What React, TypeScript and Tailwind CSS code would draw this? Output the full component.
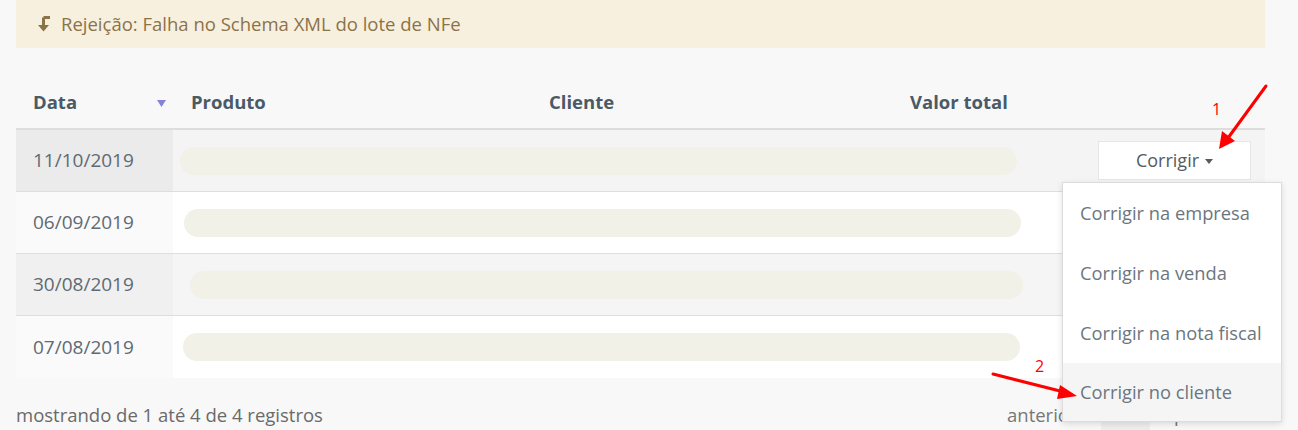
import React from "react";

const rows = [
  { date: "11/10/2019", rowBg: "bg-[#f4f4f4]", dateBg: "bg-[#ebebeb]", pill: "ml-[7px] w-[837px]" },
  { date: "06/09/2019", rowBg: "bg-white", dateBg: "bg-[#fafafa]", pill: "ml-[11px] w-[837px]" },
  { date: "30/08/2019", rowBg: "bg-[#f5f5f5]", dateBg: "bg-[#f0f0f0]", pill: "ml-[17px] w-[833px]" },
  { date: "07/08/2019", rowBg: "bg-white", dateBg: "bg-[#fafafa]", pill: "ml-[10px] w-[837px]" },
];

export default function App() {
  return (
    <div className="relative w-[1298px] h-[430px] overflow-hidden bg-[#f8f8f8] font-['Open_Sans',sans-serif] text-[18.5px]">
      {/* alert */}
      <div className="mx-4 w-[1249px] h-12 bg-[#f7f0df] flex items-center pl-[21px] gap-[11px] text-[#8b7349]">
        <svg width="13" height="16" viewBox="0 0 13 16" className="shrink-0">
          <path d="M6.5 1.5H13" stroke="#8b7349" strokeWidth="3" />
          <path d="M6.5 1.5V10" stroke="#8b7349" strokeWidth="3" />
          <path d="M1 9H12L6.5 15.5Z" fill="#8b7349" />
        </svg>
        <span className="text-[18.5px]">Rejeição: Falha no Schema XML do lote de NFe</span>
      </div>

      {/* table */}
      <div className="mx-4 mt-[30px] w-[1249px]">
        <div className="h-[52px] pb-[3px] flex items-center border-b-2 border-[#dddddd] font-bold text-[#4b5a67] text-[18.5px]">
          <div className="w-[157px] pl-[17px] flex items-center justify-between pr-[7px]">
            <span>Data</span>
            <svg width="9" height="7" viewBox="0 0 9 7" className="mt-[4px]">
              <path d="M0 0H9L4.5 7Z" fill="#8383dc" />
            </svg>
          </div>
          <div className="w-[376px] pl-[18px]">Produto</div>
          <div className="w-[361px]">Cliente</div>
          <div className="w-[170px]">Valor total</div>
        </div>
        {rows.map((r, i) => (
          <div
            key={r.date}
            className={`h-[62px] flex ${r.rowBg} ${i < 3 ? "border-b border-[#dedede]" : ""}`}
          >
            <div className={`w-[157px] pl-[17px] flex items-center text-[#5f6a73] text-[19px] ${r.dateBg}`}>{r.date}</div>
            <div className="w-[889px] flex items-center">
              <div className={`h-[28px] rounded-full bg-[#f2f1e7] ${r.pill}`} />
            </div>
            <div className="flex-1 flex items-center pl-[36px]">
              {i === 0 && (
                <div className="w-[153px] h-[39px] bg-white border border-[#e6e6e6] flex items-center justify-center gap-[6px] text-[#555b60] text-[18px]">
                  <span>Corrigir</span>
                  <svg width="8" height="5" viewBox="0 0 8 5" className="mt-[2px]">
                    <path d="M0 0H8L4 5Z" fill="#555b60" />
                  </svg>
                </div>
              )}
            </div>
          </div>
        ))}
      </div>

      {/* footer */}
      <div className="mx-4 w-[1249px] mt-[20px] flex items-center text-[#6a6a6a] text-[18.5px]">
        <span className="w-[991px] shrink-0">mostrando de 1 até 4 de 4 registros</span>
        <div className="flex items-center">
          <span className="w-[94px] text-[#777]">anterior</span>
          <div className="w-[49px] h-[34px] bg-[#eeeeee] flex items-center justify-center">1</div>
          <span className="ml-[24px] text-[#777]">próximo</span>
        </div>
      </div>

      {/* dropdown */}
      <div className="absolute left-[1062px] top-[182px] w-[220px] h-[240px] bg-white border border-[#dcdcdc] shadow-[0_2px_6px_rgba(0,0,0,0.12)] flex flex-col text-[#6b7680] text-[18.3px]">
        <div className="h-[60px] flex items-center pl-[17px]">Corrigir na empresa</div>
        <div className="h-[60px] flex items-center pl-[17px]">Corrigir na venda</div>
        <div className="h-[60px] flex items-center pl-[17px]">Corrigir na nota fiscal</div>
        <div className="flex-1 flex items-center pl-[17px] bg-[#f5f5f5]">Corrigir no cliente</div>
      </div>

      {/* annotations */}
      <svg className="absolute left-0 top-0 pointer-events-none" width="1298" height="430">
        <line x1="1266" y1="86" x2="1228" y2="138" stroke="#ff0000" strokeWidth="3" strokeLinecap="round" />
        <path d="M1219 149 L1222 131 L1235 141 Z" fill="#ff0000" />
        <line x1="993" y1="374" x2="1064" y2="392" stroke="#ff0000" strokeWidth="3" strokeLinecap="round" />
        <path d="M1077 396 L1060 385 L1057 399 Z" fill="#ff0000" />
        <text x="1212" y="115" fill="#ff0000" fontSize="16" fontFamily="Open Sans, sans-serif">1</text>
        <text x="1035" y="372" fill="#ff0000" fontSize="16" fontFamily="Open Sans, sans-serif">2</text>
      </svg>
    </div>
  );
}
